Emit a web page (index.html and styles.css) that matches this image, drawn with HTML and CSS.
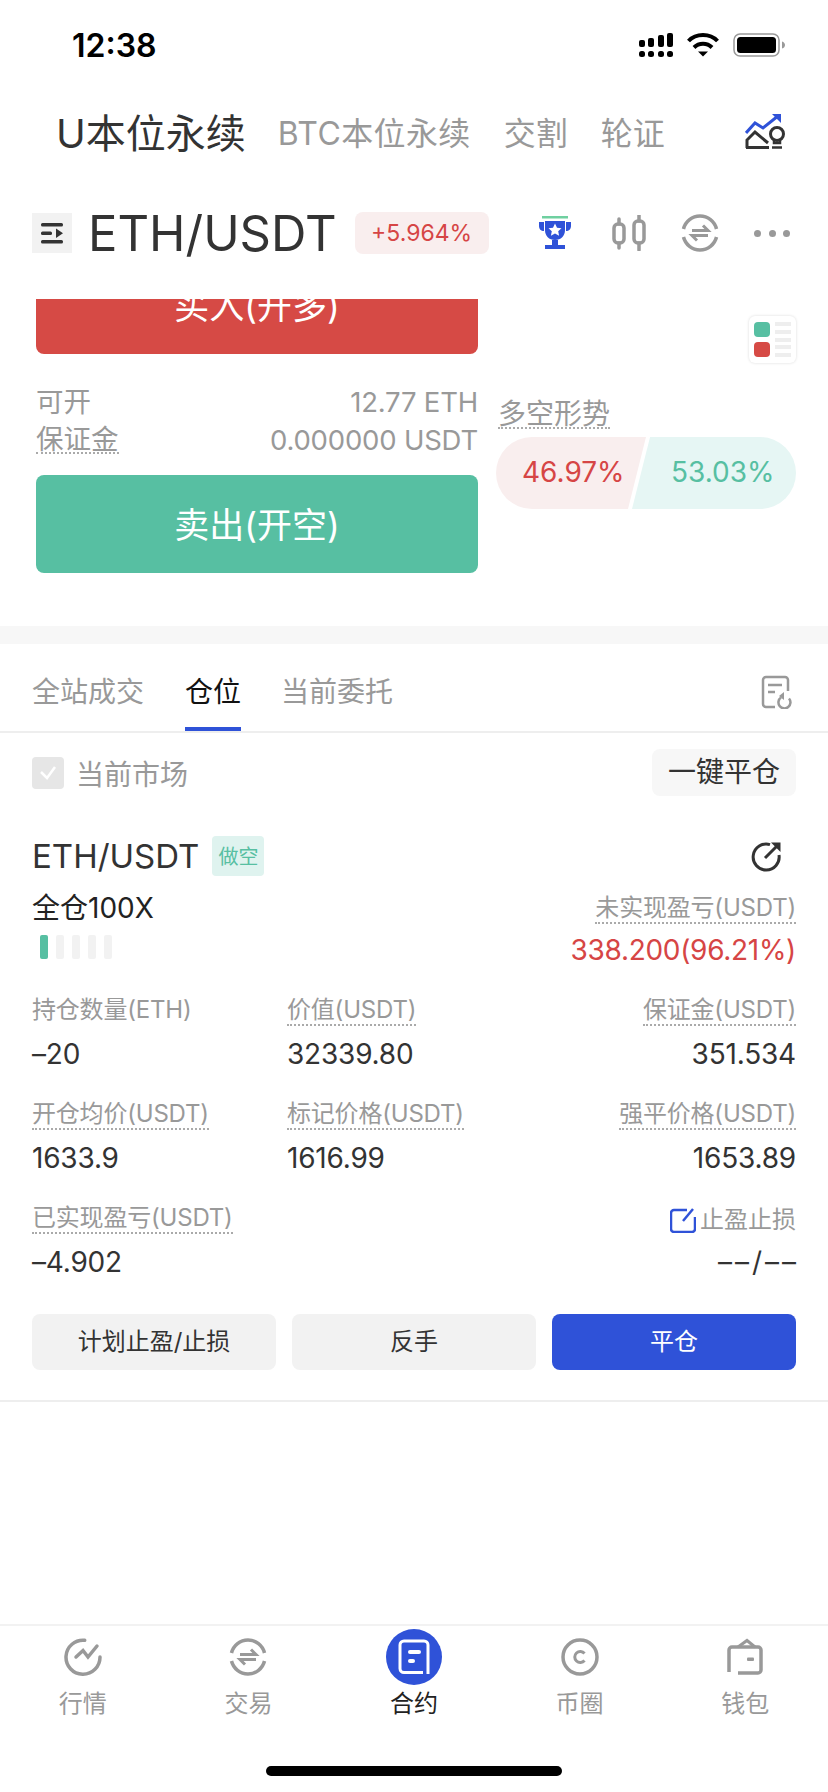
FILE: index.html
```html
<!DOCTYPE html>
<html>
<head>
  <title>合约</title>
  <meta name="viewport" content="width=device-width, initial-scale=1.0">
  <link rel="stylesheet" href="styles.css">
</head>
<body>
  <div class="page">
    <div class="status-bar">
      <span class="time">12:38</span>
      <div class="status-icons">
        <svg width="34" height="24" viewBox="0 0 34 24" fill="#000">
          <rect x="0" y="7" width="6" height="7" rx="2"/><rect x="9" y="5" width="6" height="9" rx="2"/><rect x="19" y="2" width="6" height="12" rx="2"/><rect x="28" y="0" width="6" height="14" rx="2"/>
          <rect x="0" y="18" width="6" height="6" rx="2.5"/><rect x="9" y="18" width="6" height="6" rx="2.5"/><rect x="19" y="18" width="6" height="6" rx="2.5"/><rect x="28" y="18" width="6" height="6" rx="2.5"/>
        </svg>
        <svg width="32" height="24" viewBox="0 0 32 24" fill="none" stroke="#000" stroke-width="4">
          <path d="M1.500 8C9 0 23 0 30.500 8"/><path d="M7 14.500C12 9.500 20 9.500 25 14.500"/><path d="M11 18.500h10l-5 5z" fill="#000" stroke="none"/>
        </svg>
        <svg width="52" height="24" viewBox="0 0 52 24">
          <rect x="1" y="1" width="45" height="22" rx="6" fill="none" stroke="#999" stroke-width="1.500"/>
          <rect x="4" y="4" width="39" height="16" rx="3.500" fill="#000"/>
          <path d="M49 8.500c2 .5 3 2 3 3.500s-1 3-3 3.500z" fill="#999"/>
        </svg>
      </div>
    </div>

    <div class="top-nav">
      <span class="top-nav-main">U本位永续</span>
      <span class="top-nav-item btc">BTC本位永续</span>
      <span class="top-nav-item">交割</span>
      <span class="top-nav-item">轮证</span>
      <svg class="top-nav-icon" width="40" height="38" viewBox="0 0 40 38" fill="none">
        <path d="M1 21L10 11l8 5L33 4" stroke="#2f52d8" stroke-width="3"/>
        <path d="M27 2h9v9z" fill="#2f52d8"/>
        <path d="M2 36V28l8-8 13 11M1 35.500h23" stroke="#333" stroke-width="3"/>
        <circle cx="32" cy="22" r="6.500" stroke="#333" stroke-width="3"/>
        <path d="M29 28v3h6v-3M27 35.500h10" stroke="#333" stroke-width="2.500"/>
      </svg>
    </div>

    <div class="ticker">
      <div class="menu-btn">
        <svg width="24" height="24" viewBox="0 0 24 24" fill="#333">
          <rect x="1" y="2" width="22" height="3.500" rx="1.500"/><rect x="1" y="10.500" width="11" height="3.500" rx="1.500"/><path d="M16 7.500l7 4.800-7 4.800z"/><rect x="1" y="19" width="22" height="3.500" rx="1.500"/>
        </svg>
      </div>
      <span class="pair">ETH/USDT</span>
      <span class="change">+5.964%</span>
      <div class="ticker-icons">
        <svg class="trophy" width="34" height="34" viewBox="0 0 34 34">
          <rect x="4" y="0" width="26" height="2.500" fill="#6fd0a0"/>
          <path d="M7 5h20v9c0 6-4 10-10 10S7 20 7 14zM1 6h5v9c-3 0-5-2-5-5zM33 6h-5v9c3 0 5-2 5-5zM14 24h6v5h-6zM7 29h20v4H7z" fill="#2f52d8"/>
          <path d="M17 7.500l2 4.200 4.500.5-3.300 3 .9 4.500-4.100-2.300-4.100 2.300.9-4.500-3.300-3 4.500-.5z" fill="#fff"/>
        </svg>
        <svg width="34" height="36" viewBox="0 0 34 36" fill="none" stroke="#999" stroke-width="3.500">
          <rect x="2" y="9" width="10" height="19" rx="4"/><rect x="22" y="6" width="10" height="22" rx="4"/>
          <path d="M7 4v5M7 28v5M27 0v6M27 28v7" stroke-linecap="round"/>
        </svg>
        <svg width="38" height="38" viewBox="0 0 38 38" fill="none" stroke="#999" stroke-width="3.500">
          <path d="M2.500 15A17 17 0 0 1 35.500 15M35.500 23A17 17 0 0 1 2.500 23"/>
          <path d="M11 16.500h16l-5-5M27 21.500H11l5 5" stroke-width="3"/>
        </svg>
        <div class="more-dots"><i></i><i></i><i></i></div>
      </div>
    </div>

    <div class="trade">
      <div class="trade-left">
        <div class="trade-btn buy">买入(开多)</div>
        <div class="info-row first"><span>可开</span><span>12.77 ETH</span></div>
        <div class="info-row"><span class="dotted">保证金</span><span>0.000000 USDT</span></div>
        <div class="trade-btn sell">卖出(开空)</div>
      </div>
      <div class="trade-right">
        <div class="mini-card">
          <div class="mini-blocks"><i class="mini-green"></i><i class="mini-red"></i></div>
          <div class="mini-lines"><i></i><i></i><i></i><i></i><i></i></div>
        </div>
        <div class="trend-title"><span class="dotted">多空形势</span></div>
        <div class="trend-pill">
          <div class="trend-long">46.97%</div>
          <div class="trend-short">53.03%</div>
        </div>
      </div>
    </div>

    <div class="band"></div>

    <div class="tabs">
      <span class="tab">全站成交</span>
      <span class="tab active">仓位</span>
      <span class="tab">当前委托</span>
      <svg class="tabs-icon" width="32" height="34" viewBox="0 0 32 34" fill="none" stroke="#999" stroke-width="2.500">
        <path d="M27 16V5a3 3 0 0 0-3-3H5a3 3 0 0 0-3 3v24a3 3 0 0 0 3 3h9"/>
        <path d="M7 10h14M7 17h7"/>
        <path d="M20 22.500a6 6 0 1 0 8 1"/>
        <path d="M23 17v8l-5-4z" fill="#999" stroke="none"/>
      </svg>
    </div>

    <div class="filter">
      <label class="market">
        <span class="checkbox">
          <svg width="20" height="16" viewBox="0 0 20 16" fill="none" stroke="#fff" stroke-width="2.500"><path d="M3 7l6 6 8-11"/></svg>
        </span>
        当前市场
      </label>
      <span class="close-all">一键平仓</span>
    </div>

    <div class="position">
      <div class="position-head">
        <span class="position-pair">ETH/USDT</span>
        <span class="position-tag">做空</span>
        <svg class="share" width="32" height="32" viewBox="0 0 32 32" fill="none" stroke="#333" stroke-width="3">
          <path d="M19 4.600A13 13 0 1 0 28 15"/><path d="M14 18L28 4"/><path d="M20 2.500h9.500V12z" fill="#333" stroke="none"/>
        </svg>
      </div>

      <div class="position-sum">
        <div>
          <div class="leverage">全仓100X</div>
          <div class="risk-bars"><i class="on"></i><i></i><i></i><i></i><i></i></div>
        </div>
        <div class="pnl">
          <div><span class="label">未实现盈亏(USDT)</span></div>
          <div class="pnl-value">338.200(96.21%)</div>
        </div>
      </div>

      <div class="stats">
        <div class="stat"><span class="label plain">持仓数量(ETH)</span><span class="value">–20</span></div>
        <div class="stat"><span class="label">价值(USDT)</span><span class="value">32339.80</span></div>
        <div class="stat right"><span class="label">保证金(USDT)</span><span class="value">351.534</span></div>
        <div class="stat"><span class="label">开仓均价(USDT)</span><span class="value">1633.9</span></div>
        <div class="stat"><span class="label">标记价格(USDT)</span><span class="value">1616.99</span></div>
        <div class="stat right"><span class="label">强平价格(USDT)</span><span class="value">1653.89</span></div>
        <div class="stat"><span class="label">已实现盈亏(USDT)</span><span class="value">–4.902</span></div>
        <div class="stat"></div>
        <div class="stat right tpsl">
          <span class="tpsl-label">
            <svg width="26" height="25" viewBox="0 0 26 25" fill="none" stroke="#2f52d8" stroke-width="2.500">
              <path d="M17 2H4a3 3 0 0 0-3 3v16a3 3 0 0 0 3 3h18a3 3 0 0 0 3-3V9"/><path d="M13 13L23 1"/>
            </svg>
            止盈止损
          </span>
          <span class="value empty">––/––</span>
        </div>
      </div>

      <div class="actions">
        <span class="action">计划止盈/止损</span>
        <span class="action">反手</span>
        <span class="action primary">平仓</span>
      </div>
    </div>

    <div class="spacer"></div>

    <div class="tabbar">
      <div class="tabbar-item">
        <div class="tabbar-icon">
          <svg width="38" height="38" viewBox="0 0 38 38" fill="none" stroke="#999" stroke-width="3.500" stroke-linecap="round">
            <path d="M20.700 2.300A17 17 0 1 0 36 19"/><path d="M12 19L19 12.500L24 19L33 8"/>
          </svg>
        </div>
        <span>行情</span>
      </div>
      <div class="tabbar-item">
        <div class="tabbar-icon">
          <svg width="38" height="38" viewBox="0 0 38 38" fill="none" stroke="#999" stroke-width="3.500">
            <path d="M2.500 15A17 17 0 0 1 35.500 15M35.500 23A17 17 0 0 1 2.500 23"/><path d="M11 16.500h16l-5-5M27 21.500H11l5 5" stroke-width="3"/>
          </svg>
        </div>
        <span>交易</span>
      </div>
      <div class="tabbar-item active">
        <div class="tabbar-icon">
          <div class="active-circle">
            <svg width="34" height="36" viewBox="0 0 34 36" fill="none">
              <path d="M26 33.500H7a4 4 0 0 1-4-4V6a4 4 0 0 1 4-4H27a4 4 0 0 1 4 4V35" stroke="#fff" stroke-width="3"/>
              <rect x="11" y="11" width="13" height="4" rx="2" fill="#fff"/><rect x="11" y="20" width="7" height="4" rx="2" fill="#fff"/>
            </svg>
          </div>
        </div>
        <span>合约</span>
      </div>
      <div class="tabbar-item">
        <div class="tabbar-icon">
          <svg width="38" height="38" viewBox="0 0 38 38" fill="none" stroke="#999" stroke-width="3.500">
            <circle cx="19" cy="19" r="17"/><path d="M23.500 15.500a5.500 5.500 0 1 0 0 7" stroke-width="3"/>
          </svg>
        </div>
        <span>币圈</span>
      </div>
      <div class="tabbar-item">
        <div class="tabbar-icon">
          <svg width="38" height="38" viewBox="0 0 38 38" fill="none" stroke="#999" stroke-width="3.500">
            <path d="M3 34V12a3 3 0 0 1 3-3H32a3 3 0 0 1 3 3V32a3 3 0 0 1-3 3H12"/>
            <path d="M12 9l9-6.500L29 9" stroke-width="3"/>
            <rect x="21" y="19.500" width="7" height="3.500" rx="1" fill="#999" stroke="none"/>
          </svg>
        </div>
        <span>钱包</span>
      </div>
    </div>
    <div class="home-bar"></div>
  </div>
</body>
</html>
```

FILE: styles.css
```css
* {
  box-sizing: border-box;
}

body {
  margin: 0;
  background: #fff;
  font-family: Inter, "Noto Sans CJK SC", sans-serif;
  color: #333;
}

.page {
  width: 828px;
  height: 1792px;
  display: flex;
  flex-direction: column;
  overflow: hidden;
}

.status-bar {
  height: 90px;
  padding: 0 43px 0 72px;
  display: flex;
  justify-content: space-between;
  align-items: center;
}
.time {
  font-size: 32px;
  font-weight: 600;
  color: #000;
}
.status-icons {
  display: flex;
  align-items: center;
  gap: 14px;
}

.top-nav {
  height: 82px;
  padding: 0 43px 0 56px;
  display: flex;
  align-items: center;
}
.top-nav-main {
  font-size: 40px;
  margin-right: 32px;
}
.top-nav-item {
  font-size: 32px;
  color: #999;
  margin-right: 33px;
}
.top-nav-item.btc {
  letter-spacing: 0.4px;
}
.top-nav-icon {
  margin-left: auto;
}

.ticker {
  height: 122px;
  margin-bottom: 5px;
  padding: 0 38px 0 32px;
  display: flex;
  align-items: center;
}
.menu-btn {
  width: 40px;
  height: 40px;
  background: #f2f2f2;
  display: flex;
  align-items: center;
  justify-content: center;
}
.pair {
  font-size: 49px;
  margin-left: 16px;
}
.change {
  margin-left: 18px;
  width: 134px;
  height: 42px;
  border-radius: 8px;
  background: #f9eeee;
  color: #d64545;
  font-size: 23px;
  line-height: 42px;
  text-align: center;
}
.ticker-icons {
  margin-left: auto;
  display: flex;
  align-items: center;
  gap: 35px;
}
.trophy {
  margin-right: 5px;
}
.more-dots {
  display: flex;
  gap: 7.5px;
}
.more-dots i {
  width: 7px;
  height: 7px;
  border-radius: 50%;
  background: #999;
}

.trade {
  height: 327px;
  overflow: hidden;
  padding: 0 32px 0 36px;
  display: flex;
  gap: 18px;
}
.trade-left {
  width: 442px;
}
.trade-btn {
  height: 98px;
  padding-bottom: 4px;
  border-radius: 8px;
  color: #fff;
  font-size: 35px;
  display: flex;
  align-items: center;
  justify-content: center;
}
.buy {
  background: #d64a45;
  margin-top: -43px;
  margin-bottom: 28px;
}
.sell {
  background: #57bfa2;
  margin-top: 16px;
}
.info-row {
  height: 38px;
  display: flex;
  justify-content: space-between;
  align-items: center;
  font-size: 27.5px;
  line-height: 26px;
  color: #999;
}
.info-row.first {
  height: 39px;
}
.info-row span:last-child {
  letter-spacing: -0.2px;
}
.dotted {
  border-bottom: 2px dotted #aaa;
}

.trade-right {
  flex: 1;
}
.mini-card {
  width: 47px;
  height: 47px;
  margin: 17px 0 0 auto;
  padding: 6px 5px;
  border-radius: 6px;
  box-shadow: 0 0 3px rgba(0, 0, 0, 0.15);
  display: flex;
  gap: 5px;
}
.mini-blocks {
  display: flex;
  flex-direction: column;
  gap: 5px;
}
.mini-blocks i {
  display: block;
  width: 16px;
  height: 15px;
  border-radius: 4px;
}
.mini-green {
  background: #57bfa2;
}
.mini-red {
  background: #d64a45;
}
.mini-lines {
  flex: 1;
  display: flex;
  flex-direction: column;
  justify-content: space-between;
}
.mini-lines i {
  display: block;
  height: 4px;
  background: #eee;
}
.trend-title {
  margin: 38px 0 8px 2px;
  display: flex;
  font-size: 28px;
  line-height: 26px;
  color: #999;
}
.trend-pill {
  height: 72px;
  display: flex;
  gap: 3px;
  font-size: 28px;
}
.trend-long {
  width: 150px;
  padding-left: 26px;
  line-height: 70px;
  color: #d64545;
  background: #f9eeee;
  border-radius: 36px 0 0 36px;
  clip-path: polygon(0 0, 100% 0, 88% 100%, 0 100%);
}
.trend-short {
  flex: 1;
  margin-left: -17px;
  padding-left: 39px;
  line-height: 70px;
  color: #57bfa2;
  background: #e6f6f4;
  border-radius: 0 36px 36px 0;
  clip-path: polygon(11% 0, 100% 0, 100% 100%, 0 100%);
}

.band {
  height: 18px;
  background: #f7f7f7;
}

.tabs {
  height: 89px;
  padding: 0 35px 0 32px;
  border-bottom: 2px solid #eee;
  display: flex;
  gap: 40px;
}
.tab {
  height: 87px;
  padding-top: 30px;
  font-size: 28px;
  line-height: 36px;
  color: #999;
  border-bottom: 4px solid transparent;
}
.tab.active {
  margin-left: 1px;
  color: #111;
  border-bottom-color: #2f52d8;
}
.tabs-icon {
  margin: 31px 0 0 auto;
}

.filter {
  padding: 16px 32px 0;
  display: flex;
  justify-content: space-between;
  align-items: center;
}
.market {
  display: flex;
  align-items: center;
  gap: 12px;
  font-size: 28px;
  color: #999;
}
.checkbox {
  width: 32px;
  height: 32px;
  border-radius: 4px;
  background: #e6e6e6;
  display: flex;
  align-items: center;
  justify-content: center;
}
.close-all {
  height: 47px;
  padding: 0 16px;
  border-radius: 8px;
  background: #f7f7f7;
  font-size: 28px;
  line-height: 47px;
}

.position {
  padding: 40px 32px 30px;
  border-bottom: 2px solid #eee;
}
.position-head {
  height: 40px;
  display: flex;
  align-items: center;
}
.position-pair {
  font-size: 33px;
}
.position-tag {
  margin-left: 13px;
  width: 52px;
  height: 40px;
  padding-top: 3px;
  border-radius: 4px;
  background: #dff3ef;
  color: #57bfa2;
  font-size: 20px;
  line-height: 37px;
  text-align: center;
}
.share {
  margin-left: auto;
  margin-right: 13px;
}

.position-sum {
  margin-top: 14px;
  display: flex;
  justify-content: space-between;
}
.leverage {
  padding-top: 1px;
  font-size: 28px;
  line-height: 35px;
  color: #222;
}
.risk-bars {
  margin: 9px 0 0 8px;
  display: flex;
  gap: 8px;
}
.risk-bars i {
  width: 8px;
  height: 24px;
  border-radius: 2px;
  background: #f2f2f2;
}
.risk-bars .on {
  background: #57bfa2;
}
.pnl {
  text-align: right;
}
.label {
  display: inline-block;
  padding-top: 4px;
  font-size: 24px;
  line-height: 28px;
  letter-spacing: -0.2px;
  color: #999;
  border-bottom: 2px dotted #aaa;
}
.label.plain {
  border-bottom-color: transparent;
}
.pnl-value {
  margin-top: 8px;
  font-size: 28px;
  line-height: 36px;
  letter-spacing: -0.3px;
  color: #d64545;
}

.stats {
  margin-top: 24px;
  display: grid;
  grid-template-columns: 255px 1fr auto;
  row-gap: 24px;
}
.stat {
  display: flex;
  flex-direction: column;
  align-items: flex-start;
  gap: 10px;
}
.stat.right {
  align-items: flex-end;
}
.value {
  font-size: 28px;
  line-height: 36px;
  letter-spacing: -0.2px;
  color: #333;
}
.value.empty {
  letter-spacing: 3px;
  margin-right: -3px;
}
.tpsl-label {
  margin-top: 6px;
  display: flex;
  align-items: center;
  gap: 4px;
  font-size: 24px;
  line-height: 28px;
  color: #999;
}

.actions {
  margin-top: 34px;
  display: flex;
  gap: 16px;
}
.action {
  flex: 1;
  height: 56px;
  border-radius: 8px;
  background: #f2f2f2;
  font-size: 24px;
  line-height: 56px;
  text-align: center;
}
.action.primary {
  background: #2f52d8;
  color: #fff;
}

.spacer {
  flex: 1;
}

.tabbar {
  border-top: 2px solid #f2f2f2;
  padding-top: 3px;
  display: grid;
  grid-template-columns: repeat(5, 1fr);
}
.tabbar-item {
  display: flex;
  flex-direction: column;
  align-items: center;
  font-size: 24px;
  line-height: 32px;
  color: #999;
}
.tabbar-item.active {
  color: #222;
}
.tabbar-icon {
  height: 56px;
  margin-bottom: 3px;
  display: flex;
  align-items: center;
  justify-content: center;
}
.active-circle {
  width: 56px;
  height: 56px;
  border-radius: 50%;
  background: #2f52d8;
  display: flex;
  align-items: center;
  justify-content: center;
}

.home-bar {
  width: 296px;
  height: 10px;
  margin: 46px auto 16px;
  border-radius: 5px;
  background: #000;
}
```
